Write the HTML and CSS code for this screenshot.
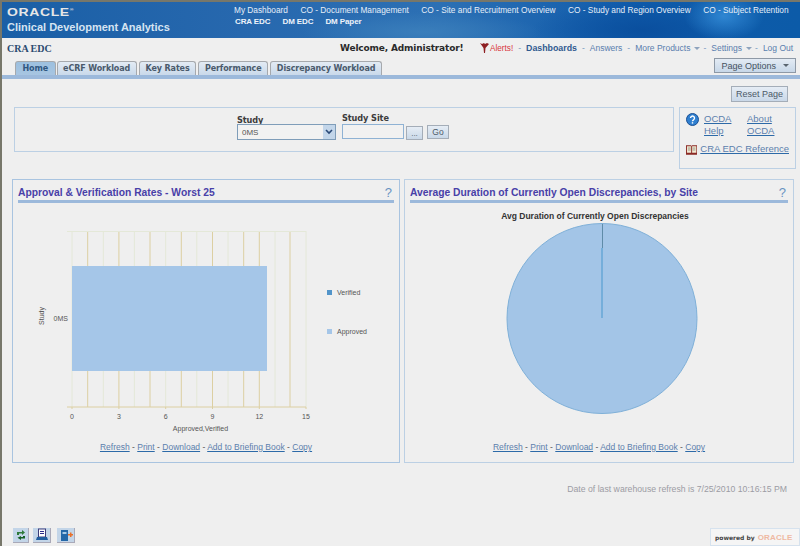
FILE: index.html
```html
<!DOCTYPE html>
<html lang="en">
<head>
<meta charset="utf-8">
<title>Oracle Clinical Development Analytics</title>
<link rel="stylesheet" href="styles.css">
</head>
<body>
<div class="app">
  <header class="banner">
    <div class="brand">
      <div class="oracle">ORACLE<sup class="reg">®</sup></div>
      <div class="product">Clinical Development Analytics</div>
    </div>
    <nav class="dash-nav">
      <div class="dash-line"><a>My Dashboard</a><a>CO - Document Management</a><a>CO - Site and Recruitment Overview</a><a>CO - Study and Region Overview</a><a>CO - Subject Retention</a></div>
      <div class="dash-line current"><a>CRA EDC</a><a>DM EDC</a><a>DM Paper</a></div>
    </nav>
  </header>

  <div class="userbar">
    <div class="dash-name">CRA EDC</div>
    <div class="welcome">Welcome, Administrator!</div>
    <nav class="global">
      <svg class="flag" width="9" height="10" viewBox="0 0 9 10"><path d="M0 0l2 1 2-1 1 1 2-1 2 1-3.500 4L5 10H4L3.500 5z" fill="#8e1f22"/></svg>
      <a class="alerts">Alerts!</a><i>-</i>
      <a class="strong">Dashboards</a><i>-</i>
      <a>Answers</a><i>-</i>
      <a>More Products</a><b class="caret"></b><i>-</i>
      <a>Settings</a><b class="caret"></b><i>-</i>
      <a>Log Out</a>
    </nav>
  </div>

  <div class="tabrow">
    <div class="tabs">
      <a class="tab active">Home</a>
      <a class="tab">eCRF Workload</a>
      <a class="tab">Key Rates</a>
      <a class="tab">Performance</a>
      <a class="tab">Discrepancy Workload</a>
    </div>
    <button class="page-options">Page Options <b class="caret dark"></b></button>
  </div>

  <main class="content">
    <div class="reset-row"><button class="btn reset">Reset Page</button></div>

    <div class="filter-row">
      <section class="filters">
        <div class="field study">
          <label>Study</label>
          <div class="select"><span>0MS</span><b class="select-arrow"><svg width="8" height="6" viewBox="0 0 8 6"><path d="M1 1l3 3 3-3" fill="none" stroke="#2b4a78" stroke-width="1.600"/></svg></b></div>
        </div>
        <div class="field site">
          <label>Study Site</label>
          <div class="site-controls">
            <div class="text-input"></div>
            <button class="btn dots">...</button>
            <button class="btn go">Go</button>
          </div>
        </div>
      </section>
      <aside class="helpbox">
        <div class="help-top">
          <svg class="help-icon" width="13" height="13" viewBox="0 0 13 13"><circle cx="6.500" cy="6.500" r="6" fill="#2f7fd0" stroke="#1b4f92"/><path d="M4.500 5a2 2 0 1 1 3 1.800c-.7.400-1 .8-1 1.500" fill="none" stroke="#fff" stroke-width="1.400"/><rect x="5.800" y="9.200" width="1.400" height="1.400" fill="#fff"/></svg>
          <a class="help-link first">OCDA Help</a>
          <a class="help-link">About OCDA</a>
        </div>
        <div class="help-ref">
          <svg width="12" height="11" viewBox="0 0 12 11"><path d="M0 1h5.500L6 2l.5-1H12v10H0z" fill="#8b2a25"/><path d="M1 2h4.500v7H1zM6.500 2H11v7H6.500z" fill="#f2e8d2"/><path d="M2 4h3M2 6h3M7 4h3M7 6h3" stroke="#9a9a8a"/></svg>
          <a class="help-link">CRA EDC Reference</a>
        </div>
      </aside>
    </div>

    <div class="panels">
      <section class="panel">
        <h2 class="panel-title"><span>Approval &amp; Verification Rates - Worst 25</span><em>?</em></h2>
        <svg class="chart" width="386" height="232" viewBox="0 0 386 232">
          <g transform="translate(-13 -203)">
            <path class="grid-a" d="M87.700 231V407M118.900 231V407M150 231V407M181.300 231V407M212.500 231V407M243.700 231V407M259.300 231V407M290 231V407"/>
            <path class="grid-b" d="M72 231V407M103.300 231V407M134.400 231V407M165.700 231V407M196.800 231V407M228 231V407M275 231V407M306 231V407M67 231.500H306"/>
            <path class="grid-a" d="M67 407H306M72 407V409M118.900 407V409M165.700 407V409M212.500 407V409M259.300 407V409M306 407V409"/>
            <rect x="72" y="266" width="195" height="105" fill="#a5c6e8"/>
            <text class="axis" x="72" y="419" text-anchor="middle">0</text>
            <text class="axis" x="118.900" y="419" text-anchor="middle">3</text>
            <text class="axis" x="165.700" y="419" text-anchor="middle">6</text>
            <text class="axis" x="212.500" y="419" text-anchor="middle">9</text>
            <text class="axis" x="259.300" y="419" text-anchor="middle">12</text>
            <text class="axis" x="306" y="419" text-anchor="middle">15</text>
            <text class="axis" x="200.500" y="431" text-anchor="middle">Approved,Verified</text>
            <text class="axis" x="68" y="321" text-anchor="end">0MS</text>
            <text class="axis" transform="translate(44 316) rotate(-90)" text-anchor="middle">Study</text>
            <rect x="327" y="290" width="5" height="5" fill="#5294c9"/>
            <text class="axis" x="337" y="295">Verified</text>
            <rect x="327" y="329" width="5" height="5" fill="#a5c6e8"/>
            <text class="axis" x="337" y="334">Approved</text>
          </g>
        </svg>
        <div class="panel-links"><a>Refresh</a> - <a>Print</a> - <a>Download</a> - <a>Add to Briefing Book</a> - <a>Copy</a></div>
      </section>
      <section class="panel right">
        <h2 class="panel-title"><span>Average Duration of Currently Open Discrepancies, by Site</span><em>?</em></h2>
        <svg class="chart" width="386" height="232" viewBox="0 0 386 232">
          <g transform="translate(-405 -203)">
            <text class="pie-title" x="595" y="219" text-anchor="middle">Avg Duration of Currently Open Discrepancies</text>
            <circle cx="602" cy="318.500" r="95" fill="#a3c5e7" stroke="#7fb0d8"/>
            <path d="M602.500 224V248" stroke="#5f8ba8"/>
            <path d="M602 248V318" stroke="#66a6d6" stroke-width="1.500"/>
          </g>
        </svg>
        <div class="panel-links"><a>Refresh</a> - <a>Print</a> - <a>Download</a> - <a>Add to Briefing Book</a> - <a>Copy</a></div>
      </section>
    </div>

    <div class="refresh-note">Date of last warehouse refresh is 7/25/2010 10:16:15 PM</div>

    <footer class="foot">
      <div class="tools">
        <button class="tool"><svg width="14" height="14" viewBox="0 0 14 14"><path d="M3 4h5V2l3 2.500L8 7V5.500H5V7H3z" fill="#2f7a3a"/><path d="M11 8v2.500H7V12L3.500 9.800 7 8v1h2V8z" fill="#156024"/></svg></button>
        <button class="tool wide"><svg width="14" height="14" viewBox="0 0 14 14"><rect x="3.500" y="1" width="7" height="8" fill="#fff" stroke="#3d3d7a"/><path d="M5 3.500h4M5 5.500h4" stroke="#2c2c8a"/><path d="M2 9h10l1 3H1z" fill="#235fa0"/></svg></button>
        <button class="tool wide next"><svg width="14" height="14" viewBox="0 0 14 14"><path d="M2 2h7v11H2z" fill="#2467a8"/><path d="M3.500 4h4v2h-4z" fill="#a9cbe8"/><path d="M9 6h2V4.500h1.500V6H14v1.500h-1.500V9H11V7.500H9z" fill="#e8702a"/></svg></button>
      </div>
      <div class="powered"><span>powered by</span><strong>ORACLE</strong></div>
    </footer>
  </main>
</div>
</body>
</html>
```
FILE: styles.css
```css
* { box-sizing: border-box; }
html, body { margin: 0; height: 100%; overflow: hidden; }
body { font-family: "Liberation Sans", Arial, sans-serif; font-size: 9px; background: #efefef; color: #333; }
a { color: inherit; }
button { font-family: inherit; padding: 0; cursor: pointer; }

.app { height: 546px; border-left: 2px solid #77776a; border-top: 2px solid #77776a; display: flex; flex-direction: column; overflow: hidden; }

.banner {
  height: 36px; flex: none; display: flex; color: #e6eef8;
  background:
    radial-gradient(ellipse 40px 24px at 722px 14px, #2f86d2 0, rgba(47,134,210,0) 100%),
    radial-gradient(ellipse 110px 30px at 640px 28px, #0a4f9e 0, rgba(10,79,158,0) 100%),
    radial-gradient(ellipse 120px 20px at 420px 30px, #3a7ebb 0, rgba(58,126,187,0) 100%),
    linear-gradient(90deg, #1a5fa6 0, #2768ae 30%, #2c70b4 55%, #0f5bab 80%, #0c5ba8 100%);
}
.brand { width: 232px; padding: 4px 0 0 5px; flex: none; }
.oracle { font-size: 11px; font-weight: 700; letter-spacing: 0.5px; line-height: 12px; color: #e6e6e6; transform: scaleX(1.27); transform-origin: left; }
.reg { font-size: 4px; vertical-align: top; line-height: 8px; }
.product { font-size: 11px; font-weight: 700; line-height: 14px; margin-top: 2px; color: #d6e4f2; white-space: nowrap; }
.dash-nav { padding-top: 3px; }
.dash-line { display: flex; gap: 12.500px; font-size: 8.300px; line-height: 11px; height: 11px; white-space: nowrap; }
.current { padding-left: 1px; gap: 12px; }
.current a { font-weight: 700; font-size: 8px; letter-spacing: -0.1px; color: #eef3fa; }

.userbar { height: 20px; flex: none; display: flex; align-items: center; position: relative; }
.dash-name { width: 338px; flex: none; padding-left: 5px; font-size: 10px; font-weight: 700; color: #2b4a6f; font-family: "Liberation Serif", serif; }
.welcome { width: 140px; flex: none; font-family: "DejaVu Sans", sans-serif; font-size: 9px; font-weight: 700; color: #2a2a2a; letter-spacing: -0.15px; white-space: nowrap; }
.global { display: flex; align-items: center; gap: 5px; font-size: 8.500px; color: #5a7eae; white-space: nowrap; }
.global i { font-style: normal; color: #7a9ac0; }
.flag { margin-right: -4px; }
.alerts { color: #d8353b; font-size: 8.200px; }
.strong { color: #2f5a8f; font-weight: 700; font-size: 8.800px; }
.caret { display: inline-block; width: 0; height: 0; border: 3px solid transparent; border-top: 3px solid #8ea3bd; border-bottom: 0; margin: 0 -2px 0 -1px; }
.caret.dark { border-top-color: #59646f; margin: 0 0 0 4px; vertical-align: 2px; }

.tabrow { flex: none; display: flex; justify-content: space-between; align-items: flex-end; padding: 0 4px 0 13px; border-bottom: 4px solid #9cb9db; box-sizing: content-box; height: 17px; }
.tabs { display: flex; gap: 2.300px; align-items: flex-end; }
.tab { height: 14px; line-height: 14px; padding: 0 5.500px; background: linear-gradient(#e3ebf4, #c9d9ea); border: 1px solid #a6a9ad; border-bottom: 0; border-radius: 3px 3px 0 0; font-family: "DejaVu Sans", sans-serif; font-size: 8px; color: #4a5a6c; font-weight: 700; letter-spacing: -0.1px; white-space: nowrap; }
.tab.active { background: linear-gradient(#9dc0df, #a7c5e1); color: #2f567f; padding: 0 6.500px; margin-right: -1.300px; }
.page-options { align-self: flex-start; width: 82px; height: 15px; background: linear-gradient(#e3ebf4, #c7d7e8); border: 1px solid #8e99a6; font-size: 9px; color: #45525f; }

.content { flex: 1; display: flex; flex-direction: column; min-height: 0; }
.reset-row { display: flex; justify-content: flex-end; padding: 7px 12px 0 0; }
.btn { background: linear-gradient(#e6edf5, #c9d8e8); border: 1px solid #a4adb8; color: #4c5a68; font-size: 9px; }
.reset { width: 57px; height: 16px; }

.filter-row { display: flex; margin: 5px 2px 0 12px; gap: 5px; align-items: flex-start; }
.filters { width: 660px; height: 45px; border: 1px solid #bcd0e4; display: flex; justify-content: flex-start; padding: 3px 0 0 222px; gap: 6px; }
.field { display: flex; flex-direction: column; }
.field label { font-family: "DejaVu Sans", sans-serif; font-size: 8.200px; font-weight: 700; color: #3c3c3c; letter-spacing: -0.1px; }
.study label { margin-top: 5px; line-height: 8px; }
.site label { margin-top: 2px; line-height: 11px; }
.select { width: 99px; height: 16px; border: 1px solid #7f9db9; display: flex; justify-content: space-between; align-items: center; padding: 0 0 0 4px; background: #f2f2f2; color: #555; font-size: 8px; }
.select-arrow { width: 12px; height: 14px; background: #c3d6ea; display: flex; align-items: center; justify-content: center; }
.site-controls { display: flex; align-items: flex-start; }
.text-input { width: 62px; height: 15px; border: 1px solid #8fb2d4; background: #f1f1f1; }
.dots { width: 17px; height: 14px; margin: 2px 0 0 2px; font-size: 8px; }
.go { width: 22px; height: 14px; margin: 1px 0 0 4px; font-size: 8.500px; }

.helpbox { width: 117px; height: 62px; border: 1px solid #bcd0e4; padding: 5px 6px 0 6px; }
.help-top { display: flex; align-items: flex-start; line-height: 11px; }
.help-icon { flex: none; margin-right: 5px; }
.help-link { color: #5c80ad; text-decoration: underline; text-decoration-color: #2d6aa8; font-size: 9.500px; line-height: 12px; }
.help-top .help-link { width: 32px; }
.help-top .help-link.first { width: 43px; padding-right: 10px; }
.help-ref { display: flex; gap: 3px; align-items: center; margin-top: 6px; white-space: nowrap; }

.panels { display: flex; gap: 4px; margin: 10px 4px 0 10px; }
.panel { width: 388px; height: 284px; border: 1px solid #a9c4e0; padding: 0 5px; position: relative; }
.panel.right { width: 390px; border-color: #bcd0e4; }
.panel-title { margin: 0; height: 23px; border-bottom: 3px solid #9cb9db; display: flex; justify-content: space-between; align-items: flex-end; font-size: 10.300px; font-weight: 700; color: #4840a8; line-height: 15px; }
.panel-title em { font-style: normal; font-weight: 400; font-size: 13px; color: #6a93c2; padding-right: 2px; }
.chart { display: block; margin: 0 -5px; }
.axis { font-size: 7px; fill: #555; font-family: "Liberation Sans", Arial, sans-serif; }
.pie-title { font-size: 8.500px; font-weight: 700; fill: #333; font-family: "Liberation Sans", Arial, sans-serif; }
.grid-a { stroke: #dccfa2; fill: none; }
.grid-b { stroke: #e4e8d8; fill: none; }
.panel-links { text-align: center; font-size: 8.500px; color: #555; line-height: 12px; margin-top: 6px; }
.panel-links a { color: #5c80ad; text-decoration: underline; text-decoration-color: #2d6aa8; }

.refresh-note { text-align: right; padding-right: 13px; margin-top: 21px; color: #9c9ca4; font-size: 8.700px; line-height: 11px; }
.foot { display: flex; justify-content: space-between; align-items: flex-start; margin-top: 33px; padding: 0 0 0 11px; }
.tools { display: flex; gap: 4px; }
.tool { width: 16px; height: 15px; background: #c3d5e8; border: 0; border-right: 1px solid #a9a9b8; border-bottom: 1px solid #a9a9b8; display: flex; align-items: center; justify-content: center; }
.tool.wide { width: 18px; }
.tool.next { margin-left: 2px; }
.powered { width: 90px; height: 18px; border: 1px solid #d6e2ee; background: #f5f5f5; display: flex; align-items: center; gap: 3px; padding-left: 4px; font-family: "DejaVu Sans", sans-serif; }
.powered span { font-size: 6px; font-weight: 700; color: #444; white-space: nowrap; }
.powered strong { font-size: 8px; color: #efb9a2; letter-spacing: 0.2px; font-family: "Liberation Sans", sans-serif; }
```
